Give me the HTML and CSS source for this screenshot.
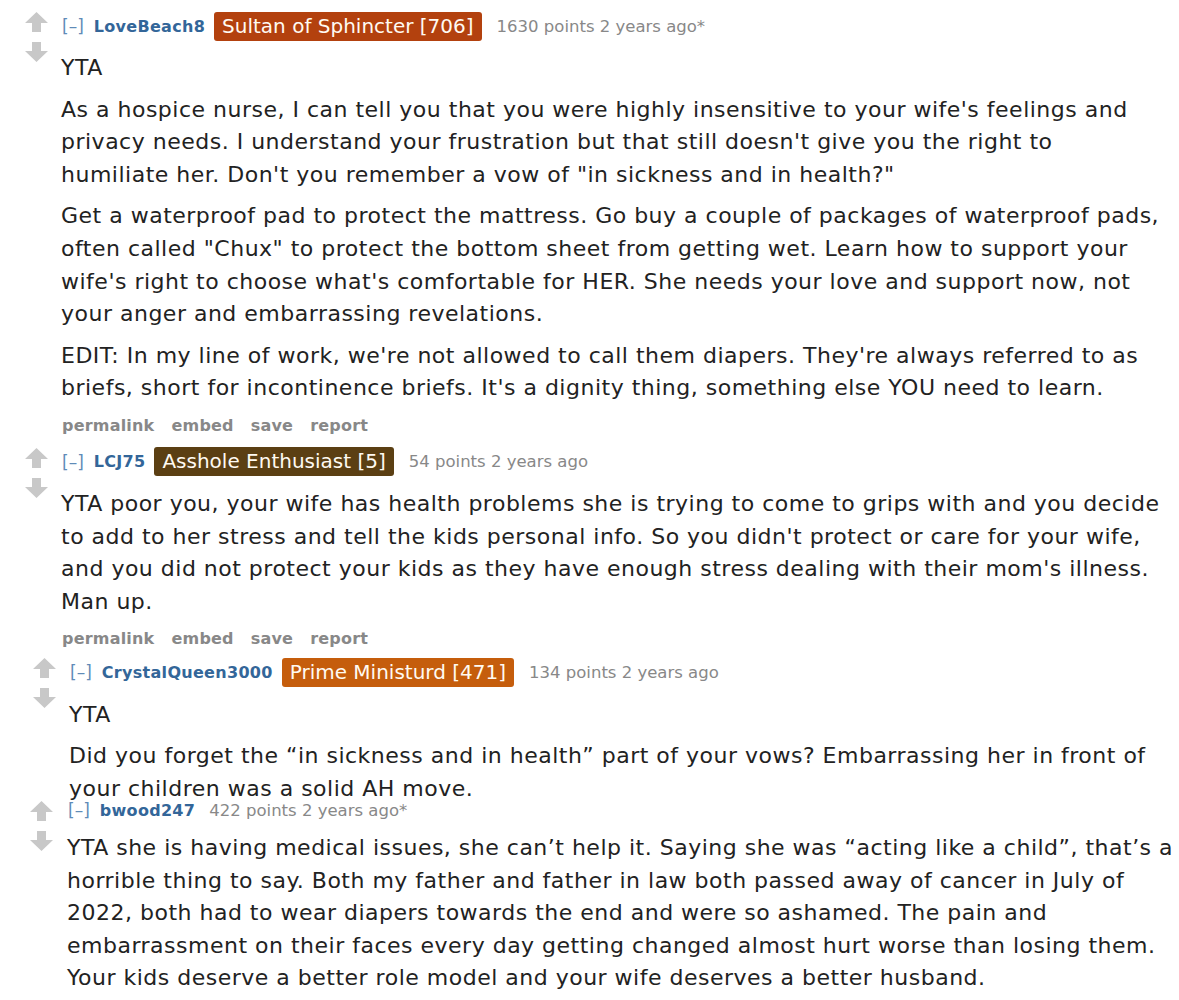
FILE: index.html
```html
<!DOCTYPE html>
<html>
<head>
<meta charset="utf-8">
<link rel="stylesheet" href="styles.css">
</head>
<body>
<div class="thread">

  <div class="comment c1">
    <div class="votes">
      <svg class="arrow" viewBox="0 0 23 20"><path d="M11.5 0 L23 11 L16 11 L16 20 L7 20 L7 11 L0 11 Z"/></svg>
      <svg class="arrow" viewBox="0 0 23 20"><path d="M11.5 20 L23 9 L16 9 L16 0 L7 0 L7 9 L0 9 Z"/></svg>
    </div>
    <div class="entry">
      <div class="tagline">
        <span class="expand">[–]</span>
        <span class="author">LoveBeach8</span>
        <span class="flair f-sultan">Sultan of Sphincter [706]</span>
        <span class="meta">1630 points 2 years ago*</span>
      </div>
      <div class="md">
        <p>YTA</p>
        <p>As a hospice nurse, I can tell you that you were highly insensitive to your wife's feelings and privacy needs. I understand your frustration but that still doesn't give you the right to humiliate her. Don't you remember a vow of "in sickness and in health?"</p>
        <p>Get a waterproof pad to protect the mattress. Go buy a couple of packages of waterproof pads, often called "Chux" to protect the bottom sheet from getting wet. Learn how to support your wife's right to choose what's comfortable for HER. She needs your love and support now, not your anger and embarrassing revelations.</p>
        <p>EDIT: In my line of work, we're not allowed to call them diapers. They're always referred to as briefs, short for incontinence briefs. It's a dignity thing, something else YOU need to learn.</p>
      </div>
      <ul class="buttons">
        <li>permalink</li><li>embed</li><li>save</li><li>report</li>
      </ul>
    </div>
  </div>

  <div class="comment c2">
    <div class="votes">
      <svg class="arrow" viewBox="0 0 23 20"><path d="M11.5 0 L23 11 L16 11 L16 20 L7 20 L7 11 L0 11 Z"/></svg>
      <svg class="arrow" viewBox="0 0 23 20"><path d="M11.5 20 L23 9 L16 9 L16 0 L7 0 L7 9 L0 9 Z"/></svg>
    </div>
    <div class="entry">
      <div class="tagline">
        <span class="expand">[–]</span>
        <span class="author">LCJ75</span>
        <span class="flair f-enthusiast">Asshole Enthusiast [5]</span>
        <span class="meta">54 points 2 years ago</span>
      </div>
      <div class="md">
        <p>YTA poor you, your wife has health problems she is trying to come to grips with and you decide to add to her stress and tell the kids personal info. So you didn't protect or care for your wife, and you did not protect your kids as they have enough stress dealing with their mom's illness. Man up.</p>
      </div>
      <ul class="buttons">
        <li>permalink</li><li>embed</li><li>save</li><li>report</li>
      </ul>
    </div>
  </div>

  <div class="comment c3">
    <div class="votes">
      <svg class="arrow" viewBox="0 0 23 20"><path d="M11.5 0 L23 11 L16 11 L16 20 L7 20 L7 11 L0 11 Z"/></svg>
      <svg class="arrow" viewBox="0 0 23 20"><path d="M11.5 20 L23 9 L16 9 L16 0 L7 0 L7 9 L0 9 Z"/></svg>
    </div>
    <div class="entry">
      <div class="tagline">
        <span class="expand">[–]</span>
        <span class="author">CrystalQueen3000</span>
        <span class="flair f-prime">Prime Ministurd [471]</span>
        <span class="meta">134 points 2 years ago</span>
      </div>
      <div class="md">
        <p>YTA</p>
        <p>Did you forget the “in sickness and in health” part of your vows? Embarrassing her in front of your children was a solid AH move.</p>
      </div>
    </div>
  </div>

  <div class="comment c4">
    <div class="votes">
      <svg class="arrow" viewBox="0 0 23 20"><path d="M11.5 0 L23 11 L16 11 L16 20 L7 20 L7 11 L0 11 Z"/></svg>
      <svg class="arrow" viewBox="0 0 23 20"><path d="M11.5 20 L23 9 L16 9 L16 0 L7 0 L7 9 L0 9 Z"/></svg>
    </div>
    <div class="entry">
      <div class="tagline small">
        <span class="expand">[–]</span>
        <span class="author">bwood247</span>
        <span class="meta">422 points 2 years ago*</span>
      </div>
      <div class="md">
        <p>YTA she is having medical issues, she can’t help it. Saying she was “acting like a child”, that’s a horrible thing to say. Both my father and father in law both passed away of cancer in July of 2022, both had to wear diapers towards the end and were so ashamed. The pain and embarrassment on their faces every day getting changed almost hurt worse than losing them. Your kids deserve a better role model and your wife deserves a better husband.</p>
      </div>
    </div>
  </div>

</div>
</body>
</html>
```

FILE: styles.css
```css
html, body {
  margin: 0;
  padding: 0;
  background: #ffffff;
}

body {
  font-family: "DejaVu Sans", Verdana, sans-serif;
  color: #222222;
  width: 1179px;
  overflow: hidden;
}

.thread {
  display: flex;
  flex-direction: column;
}

.comment {
  display: flex;
  align-items: flex-start;
}

.votes {
  width: 23px;
  flex: none;
  display: flex;
  flex-direction: column;
  gap: 10px;
  padding-top: 1px;
}

.arrow {
  width: 23px;
  height: 20px;
  display: block;
  fill: #c8c8c8;
}

.entry {
  flex: 1;
  min-width: 0;
  margin-left: 13px;
}

.tagline {
  display: flex;
  align-items: center;
  height: 30px;
  font-size: 16px;
  white-space: nowrap;
}

.tagline.small {
  height: 20px;
}

.expand {
  color: #5f8bb8;
  font-size: 17px;
  margin-left: 1px;
  margin-right: 10px;
}

.author {
  color: #336699;
  font-weight: bold;
  letter-spacing: 0.3px;
}

.flair {
  font-size: 20px;
  color: #fffaf2;
  height: 29px;
  line-height: 29px;
  padding: 0 8px;
  border-radius: 3px;
  margin-left: 9px;
}

.f-sultan { background: #b3410e; }
.f-enthusiast { background: #5b3f13; }
.f-prime { background: #c55d0c; }

.meta {
  color: #888888;
  font-size: 16.5px;
  margin-left: 15px;
}

.tagline.small .meta {
  margin-left: 14px;
}

.md {
  font-size: 22px;
  letter-spacing: 0.5px;
  line-height: 32.6px;
}

.md p {
  margin: 9px 0 0 0;
}

.md p:first-child {
  margin-top: 11px;
}

.c1 .md {
  padding-right: 14px;
}

.buttons {
  list-style: none;
  margin: 11px 0 0 1px;
  padding: 0;
  display: flex;
  gap: 17px;
  font-size: 16px;
  line-height: 20px;
  font-weight: bold;
  letter-spacing: 0.2px;
  color: #888888;
}

.c1 {
  padding: 11px 0 0 25px;
}

.c2 {
  padding: 11px 0 0 25px;
}

.c3 {
  padding: 8px 0 0 33px;
}

.c3 .md p:first-child {
  margin-top: 12px;
}

.c3 .md p {
  margin-top: 8px;
}

.c4 {
  padding: 0 0 0 30px;
  margin-top: -5px;
}

.c4 .entry {
  margin-left: 14px;
}

.c4 .md p:first-child {
  margin-top: 12px;
}
```
